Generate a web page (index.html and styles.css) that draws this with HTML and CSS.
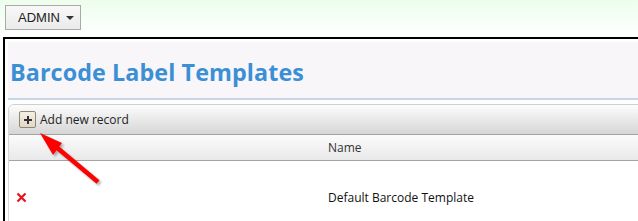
FILE: index.html
```html
<!DOCTYPE html>
<html>
<head>
<meta charset="utf-8">
<link rel="stylesheet" href="styles.css">
</head>
<body>
<div class="top">
  <button class="admin">ADMIN <span class="caret"></span></button>
</div>
<div class="frame">
  <div class="panel-head">
    <h1 class="title">Barcode Label Templates</h1>
  </div>
  <div class="grid">
    <div class="toolbar">
      <span class="plus-btn"><svg width="10" height="10" viewBox="0 0 10 10"><path d="M5 1v8M1 5h8" stroke="#333" stroke-width="2"/></svg></span>
      <span class="toolbar-text">Add new record</span>
    </div>
    <div class="header-row">
      <div class="col-cmd"></div>
      <div class="col-name">Name</div>
    </div>
    <div class="data-row">
      <div class="col-cmd"><svg width="11" height="11" viewBox="0 0 11 11"><path d="M1.5 1.5l8 8M9.5 1.5l-8 8" stroke="#e8141b" stroke-width="2.2"/></svg></div>
      <div class="col-name">Default Barcode Template</div>
    </div>
  </div>
</div>
<svg class="arrow" width="72" height="60" viewBox="0 0 72 60">
  <defs>
    <filter id="sh" x="-20%" y="-20%" width="140%" height="140%">
      <feGaussianBlur stdDeviation="1.2"/>
    </filter>
  </defs>
  <g transform="translate(2,2)" filter="url(#sh)" opacity="0.45">
    <path d="M60 52L17 16" stroke="#555" stroke-width="4.5"/>
    <path d="M2 3L24 13L15 25Z" fill="#555"/>
  </g>
  <path d="M60 52L17 16" stroke="#ff0000" stroke-width="4.5"/>
  <path d="M2 3L24 13L15 25Z" fill="#ff0000"/>
</svg>
</body>
</html>
```
FILE: styles.css
```css
html, body {
  margin: 0;
  padding: 0;
  background: #fff;
  font-family: "Open Sans", "Segoe UI", "DejaVu Sans", sans-serif;
}
body {
  position: relative;
  width: 638px;
  height: 221px;
  overflow: hidden;
}
.top {
  height: 37px;
  box-sizing: border-box;
  padding: 5px 0 0 5px;
  background: linear-gradient(#ecfeec, #ffffff);
}
.admin {
  display: flex;
  align-items: center;
  gap: 6px;
  height: 25px;
  width: 76px;
  box-sizing: border-box;
  padding: 0 0 0 12px;
  border: 1px solid #a9a9a9;
  border-radius: 0;
  background: linear-gradient(#f8f8f8, #ebebeb);
  font-family: "Liberation Sans", Arial, sans-serif;
  font-size: 13px;
  color: #222;
}
.caret {
  width: 0;
  height: 0;
  border-left: 4px solid transparent;
  border-right: 4px solid transparent;
  border-top: 4px solid #333;
}
.frame {
  margin-left: 3px;
  border-top: 2px solid #000;
  border-left: 2px solid #000;
  padding: 3px 0 0 3px;
}
.panel-head {
  height: 58px;
  box-sizing: border-box;
  background: #f8f6f9;
  border-bottom: 2px solid #c5d5e3;
  padding: 15px 0 0 2px;
}
.title {
  margin: 0;
  font-size: 23.3px;
  font-weight: 700;
  color: #3b8fd5;
  line-height: 30px;
  letter-spacing: 0.1px;
}
.grid {
  margin-top: 4px;
  border-top: 1px solid #cfcfcf;
  border-left: 1px solid #d6d6d6;
  border-top-left-radius: 6px;
}
.toolbar {
  height: 30px;
  box-sizing: border-box;
  display: flex;
  align-items: center;
  gap: 4px;
  padding-left: 10px;
  background: linear-gradient(#fcfcfc, #d6d6d6);
  border-bottom: 1px solid #a4a4a4;
  border-top-left-radius: 5px;
}
.plus-btn {
  width: 17px;
  height: 17px;
  box-sizing: border-box;
  border: 1px solid #8f8678;
  border-radius: 2px;
  background: linear-gradient(#f6efe4, #e2d8c8);
  display: flex;
  align-items: center;
  justify-content: center;
}
.toolbar-text {
  font-size: 12px;
  color: #222;
}
.header-row {
  height: 26px;
  box-sizing: border-box;
  display: flex;
  align-items: center;
  background: linear-gradient(#fbfbfb, #e9e9e9);
  border-bottom: 1px solid #a4a4a4;
}
.col-cmd {
  width: 319px;
  padding-left: 7px;
  box-sizing: border-box;
  display: flex;
  align-items: center;
}
.col-name {
  font-size: 12px;
  color: #333;
}
.data-row {
  height: 60px;
  box-sizing: border-box;
  padding-top: 28px;
  display: flex;
  align-items: flex-start;
}
.data-row > div {
  height: 17px;
}
.data-row .col-name {
  color: #111;
  line-height: 17px;
}
.arrow {
  position: absolute;
  left: 38px;
  top: 130px;
}
```
